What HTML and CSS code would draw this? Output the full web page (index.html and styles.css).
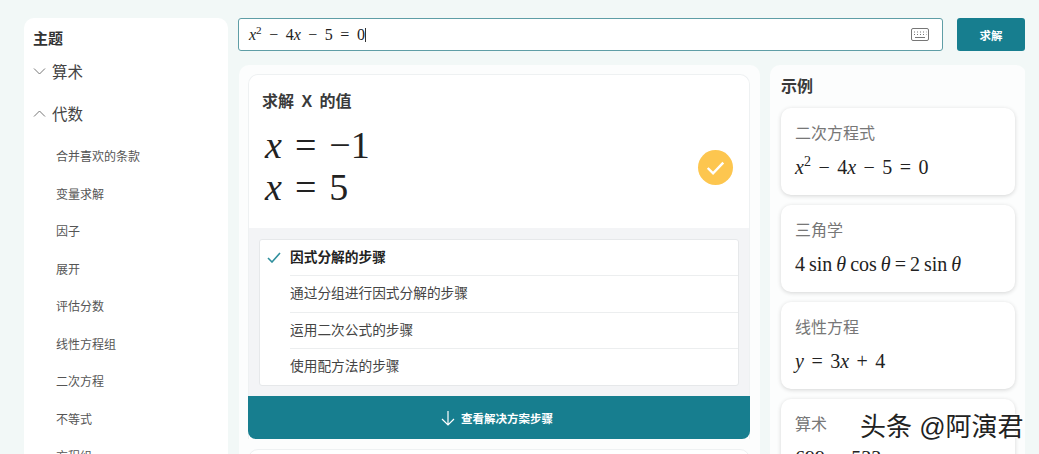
FILE: index.html
```html
<!DOCTYPE html>
<html lang="zh">
<head>
    <meta charset="utf-8">
    <title>求解</title>
    <link rel="stylesheet" href="styles.css">
</head>

<body>
<div class="sidebar">
    <h3 class="sidebarTitle">主题</h3>
    <div class="topic">
        <svg class="chevron" viewBox="0 0 12 7"><path d="M.5.5 6 6l5.5-5.5"/></svg>
        <span>算术</span>
    </div>
    <div class="topic">
        <svg class="chevron" viewBox="0 0 12 7"><path d="M.5 6.5 6 1l5.5 5.5"/></svg>
        <span>代数</span>
    </div>
    <ul class="subTopics">
        <li>合并喜欢的条款</li>
        <li>变量求解</li>
        <li>因子</li>
        <li>展开</li>
        <li>评估分数</li>
        <li>线性方程组</li>
        <li>二次方程</li>
        <li>不等式</li>
        <li>方程组</li>
    </ul>
</div>

<div class="content">
    <div class="searchBar">
        <div class="mathInput">
            <span class="math"><i>x</i><sup>2</sup> − 4<i>x</i> − 5 = 0</span><span class="caret"></span>
            <svg class="keyboard" viewBox="0 0 18 13">
                <rect x=".5" y=".5" width="17" height="12" rx="1.5"/>
                <path d="M3 4h1M6 4h1M9 4h1M12 4h1M15 4h.5M3 6.5h1M6 6.5h1M9 6.5h1M12 6.5h1M15 6.5h.5M4 9.5h10"/>
            </svg>
        </div>
        <button class="solveButton">求解</button>
    </div>

    <div class="columns">
        <div class="mainPanel">
            <div class="resultCard">
                <div class="resultTop">
                    <div>
                        <h2 class="resultTitle">求解 X 的值</h2>
                        <div class="math resultLine"><i>x</i> = −1</div>
                        <div class="math resultLine"><i>x</i> = 5</div>
                    </div>
                    <div class="okBadge">
                        <svg viewBox="0 0 36 36"><path d="M10 18.5l5.5 5.5L26 13"/></svg>
                    </div>
                </div>
                <div class="methods">
                    <ul class="methodList">
                        <li class="method selected">
                            <svg class="tick" viewBox="0 0 14 11"><path d="M1 6l4 4 8-9"/></svg>
                            <span>因式分解的步骤</span>
                        </li>
                        <li class="method"><span>通过分组进行因式分解的步骤</span></li>
                        <li class="method"><span>运用二次公式的步骤</span></li>
                        <li class="method"><span>使用配方法的步骤</span></li>
                    </ul>
                </div>
                <button class="stepsButton">
                    <svg viewBox="0 0 14 16"><path d="M7 1v14M1 9l6 6 6-6"/></svg>
                    查看解决方案步骤
                </button>
            </div>
            <div class="nextCard"></div>
        </div>

        <div class="examples">
            <h2 class="examplesTitle">示例</h2>
            <div class="exampleCard">
                <div class="exampleName">二次方程式</div>
                <div class="math exampleMath"><i>x</i><sup>2</sup> − 4<i>x</i> − 5 = 0</div>
            </div>
            <div class="exampleCard">
                <div class="exampleName">三角学</div>
                <div class="math exampleMath trig">4 sin <i>θ</i> cos <i>θ</i> = 2 sin <i>θ</i></div>
            </div>
            <div class="exampleCard">
                <div class="exampleName">线性方程</div>
                <div class="math exampleMath"><i>y</i> = 3<i>x</i> + 4</div>
            </div>
            <div class="exampleCard">
                <div class="exampleName">算术</div>
                <div class="math exampleMath">699 − 533</div>
            </div>
        </div>
    </div>
</div>

<div class="watermark">头条 @阿演君</div>
</body>
</html>
```

FILE: styles.css
```css
html, body {
    height: 454px;
    overflow: hidden;
}

body {
    margin: 0;
    padding: 18px 14px 0 24px;
    box-sizing: border-box;
    display: flex;
    gap: 10px;
    background-color: #f2f8f7;
    color: #333333;
    font-family: "Liberation Sans", "Noto Sans CJK SC", sans-serif;
}

h2, h3, ul {
    margin: 0;
    padding: 0;
}

ul {
    list-style: none;
}

svg {
    fill: none;
    stroke: currentColor;
}

.math {
    font-family: "Liberation Serif", serif;
    color: #222222;
    white-space: nowrap;
}

.math sup {
    font-size: 70%;
    line-height: 0;
}

/* colonne de gauche */
.sidebar {
    width: 204px;
    flex-shrink: 0;
    overflow: hidden;
    background-color: #ffffff;
    border-radius: 10px 10px 0 0;
    padding: 12px 0 0 9px;
    box-sizing: border-box;
}

.sidebarTitle {
    font-size: 15px;
    line-height: 18px;
    color: #333333;
}

.topic {
    display: flex;
    align-items: center;
    gap: 6px;
    height: 24px;
    margin-top: 11px;
    margin-bottom: 18px;
    font-size: 15.5px;
    color: #444444;
}

.topic + .topic {
    margin-top: 0;
    margin-bottom: 0;
}

.topic:first-of-type {
    margin-top: 11px;
}

.chevron {
    width: 13px;
    height: 7px;
    color: #777777;
}

.subTopics {
    margin-top: 14px;
    padding-left: 23px;
    font-size: 12px;
    color: #555555;
}

.subTopics li {
    height: 37.5px;
    line-height: 37.5px;
}

/* colonne principale */
.content {
    flex: 1;
    min-width: 0;
    display: flex;
    flex-direction: column;
    gap: 14px;
}

.searchBar {
    display: flex;
    flex-shrink: 0;
    gap: 14px;
    height: 33px;
}

.mathInput {
    flex: 1;
    display: flex;
    align-items: center;
    padding: 0 10px;
    background-color: #ffffff;
    border: 1px solid #5f9ea6;
    border-radius: 3px;
    font-size: 16px;
    word-spacing: 3.5px;
}

.caret {
    width: 1px;
    height: 14px;
    background-color: #333333;
}

.keyboard {
    width: 18px;
    height: 13px;
    margin-left: auto;
    margin-right: 3px;
    color: #777777;
}

.solveButton {
    width: 68px;
    border: none;
    border-radius: 3px;
    background-color: #177e8f;
    color: #ffffff;
    font-family: inherit;
    font-size: 11.5px;
    font-weight: bold;
}

.columns {
    flex: 1;
    min-height: 0;
    overflow: hidden;
    display: flex;
    gap: 10px;
    padding-left: 1px;
}

.mainPanel {
    width: 521px;
    flex-shrink: 0;
    overflow: hidden;
    background-color: #fcfdfd;
    border-radius: 10px 10px 0 0;
    padding: 9px 10px 0 9px;
    box-sizing: border-box;
}

.resultCard {
    background-color: #ffffff;
    border: 1px solid #eef1f2;
    border-bottom: none;
    border-radius: 10px 10px 0 0;
}

.resultTop {
    height: 153px;
    box-sizing: border-box;
    display: flex;
    justify-content: space-between;
    align-items: flex-start;
    padding: 17px 16px 0 13px;
}

.resultTitle {
    font-size: 16px;
    line-height: 20px;
    color: #3a3a3a;
    word-spacing: 3px;
}

.resultLine {
    padding-left: 3px;
    font-size: 38px;
    line-height: 42px;
    word-spacing: 3.5px;
}

.resultTitle + .resultLine {
    margin-top: 12px;
}

.okBadge {
    width: 35px;
    height: 35px;
    margin-top: 58px;
    border-radius: 50%;
    background-color: #fdc64f;
    color: #ffffff;
}

.okBadge svg {
    display: block;
    stroke-width: 2.5;
}

.methods {
    background-color: #f3f4f6;
    padding: 11px 10px 10.5px;
}

.methodList {
    background-color: #ffffff;
    border: 1px solid #e6e8ea;
    border-radius: 3px;
}

.method {
    position: relative;
    height: 36.5px;
    line-height: 36px;
    margin-left: 30px;
    font-size: 13.7px;
    color: #444444;
    border-top: 1px solid #eceeef;
    box-sizing: border-box;
}

.method:first-child {
    height: 35px;
    line-height: 35px;
    border-top: none;
    margin-right: 3px;
}

.selected {
    font-weight: bold;
    color: #222222;
}

.tick {
    position: absolute;
    left: -23px;
    top: 12px;
    width: 14px;
    height: 11px;
    color: #2f8f9d;
    stroke-width: 1.6;
}

.stepsButton {
    display: flex;
    align-items: center;
    justify-content: center;
    gap: 6px;
    width: 502px;
    height: 43px;
    margin-left: -1px;
    padding: 0 4px 0 0;
    border: none;
    border-radius: 0 0 8px 8px;
    background-color: #177e8f;
    color: #ffffff;
    font-family: inherit;
    font-size: 11.5px;
    font-weight: bold;
}

.stepsButton svg {
    width: 14px;
    height: 16px;
    stroke-width: 1.2;
}

.nextCard {
    height: 30px;
    margin-top: 10px;
    background-color: #ffffff;
    border: 1px solid #eef1f2;
    border-radius: 10px 10px 0 0;
}

/* exemples */
.examples {
    width: 256px;
    flex-shrink: 0;
    overflow: hidden;
    background-color: #fcfdfd;
    border-radius: 10px 10px 0 0;
    padding: 11px 11px 0;
    box-sizing: border-box;
}

.examplesTitle {
    font-size: 16px;
    line-height: 22px;
    color: #3a3a3a;
    margin-bottom: 10px;
}

.exampleCard {
    height: 87px;
    margin-bottom: 10px;
    padding: 15px 14px 0;
    box-sizing: border-box;
    background-color: #ffffff;
    border-radius: 10px;
    box-shadow: 0 1px 4px rgba(0, 0, 0, 0.16);
}

.exampleName {
    font-size: 16px;
    line-height: 22px;
    color: #777777;
}

.exampleMath {
    margin-top: 10px;
    font-size: 20px;
    line-height: 24px;
    word-spacing: 2.5px;
}

.exampleMath.trig {
    word-spacing: -1px;
}

.watermark {
    position: absolute;
    left: 860px;
    top: 412px;
    font-size: 26px;
    line-height: 30px;
    color: #222222;
    white-space: nowrap;
    text-shadow: 1px 1px 0 #ffffff, -1px -1px 0 #ffffff, 1px -1px 0 #ffffff, -1px 1px 0 #ffffff;
}
```
